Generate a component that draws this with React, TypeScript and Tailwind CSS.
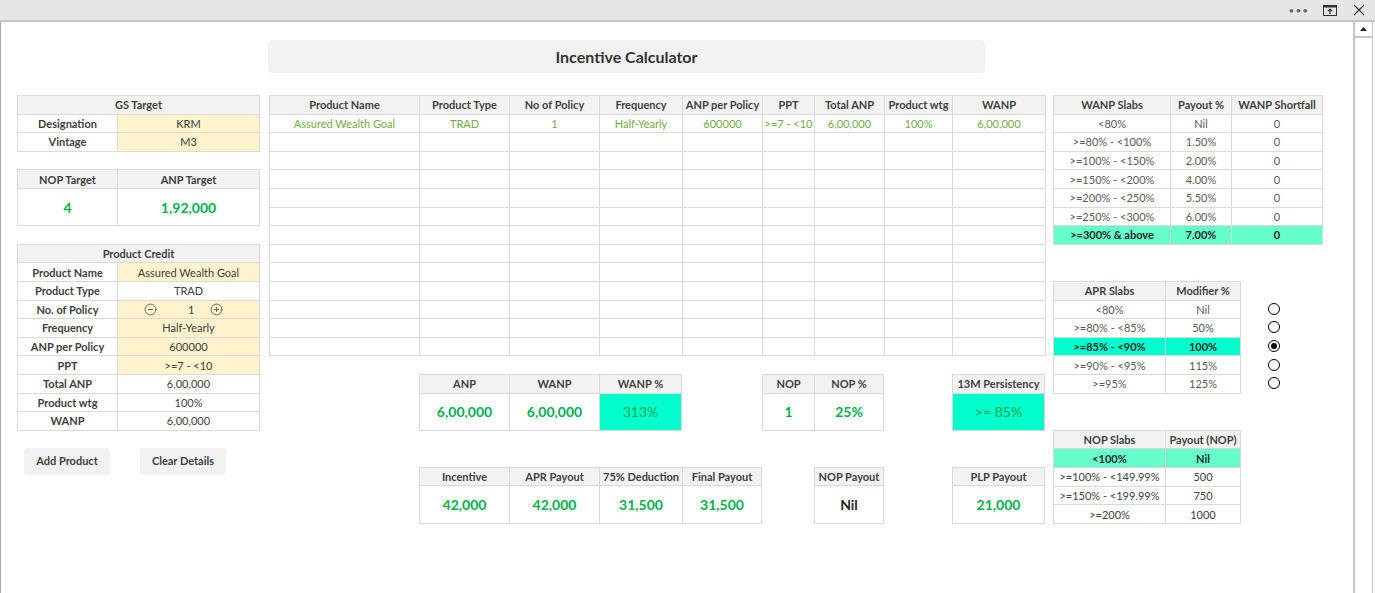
import type { ReactNode } from 'react';
import { CircleMinus, CirclePlus } from 'lucide-react';

type CellProps = { children?: ReactNode; className?: string };

function Cell({ children, className = '' }: CellProps) {
  return (
    <div
      className={`flex h-[18.6px] items-center justify-center whitespace-nowrap border-r border-b border-[#d9d9d9] text-[11px] leading-none ${className}`}
    >
      {children}
    </div>
  );
}

function Head({ children, className = '' }: CellProps) {
  return <Cell className={`bg-[#f2f2f2] font-bold text-[#404040] ${className}`}>{children}</Cell>;
}

function Value({ children, className = '' }: CellProps) {
  return (
    <div
      className={`flex h-[37.2px] items-center justify-center border-r border-b border-[#d9d9d9] text-[14px] ${className}`}
    >
      {children}
    </div>
  );
}

const productCredit: { label: string; value: ReactNode; yellow?: boolean }[] = [
  { label: 'Product Name', value: 'Assured Wealth Goal', yellow: true },
  { label: 'Product Type', value: 'TRAD' },
  {
    label: 'No. of Policy',
    yellow: true,
    value: (
      <span className="flex w-full items-center pl-[26px]">
        <CircleMinus size={13} strokeWidth={1.4} className="text-[#404040]" />
        <span className="ml-[31px]">1</span>
        <CirclePlus size={13} strokeWidth={1.4} className="ml-[16px] text-[#404040]" />
      </span>
    ),
  },
  { label: 'Frequency', value: 'Half-Yearly', yellow: true },
  { label: 'ANP per Policy', value: '600000', yellow: true },
  { label: 'PPT', value: '>=7 - <10', yellow: true },
  { label: 'Total ANP', value: '6,00,000' },
  { label: 'Product wtg', value: '100%' },
  { label: 'WANP', value: '6,00,000' },
];

const mainHeaders = [
  'Product Name',
  'Product Type',
  'No of Policy',
  'Frequency',
  'ANP per Policy',
  'PPT',
  'Total ANP',
  'Product wtg',
  'WANP',
];

const firstRow = ['Assured Wealth Goal', 'TRAD', '1', 'Half-Yearly', '600000', '>=7 - <10', '6,00,000', '100%', '6,00,000'];

const wanpSlabs = [
  ['<80%', 'Nil', '0'],
  ['>=80% - <100%', '1.50%', '0'],
  ['>=100% - <150%', '2.00%', '0'],
  ['>=150% - <200%', '4.00%', '0'],
  ['>=200% - <250%', '5.50%', '0'],
  ['>=250% - <300%', '6.00%', '0'],
];

const aprSlabs = [
  ['<80%', 'Nil'],
  ['>=80% - <85%', '50%'],
  ['>=85% - <90%', '100%'],
  ['>=90% - <95%', '115%'],
  ['>=95%', '125%'],
];

const nopSlabs = [
  ['>=100% - <149.99%', '500'],
  ['>=150% - <199.99%', '750'],
  ['>=200%', '1000'],
];

function TopBar() {
  return (
    <div className="flex h-[22px] shrink-0 items-center justify-end border-b-2 border-[#c4c4c4] bg-[#e6e6e6] pr-[10px]">
      <span className="mr-[14px] text-[10px] leading-none tracking-[1px] text-[#666]">•••</span>
      <svg width="14" height="11" viewBox="0 0 14 11" className="mr-[16px]">
        <rect x="0.5" y="0.5" width="13" height="10" fill="none" stroke="#333" />
        <rect x="0.5" y="0.5" width="13" height="2" fill="#333" />
        <path d="M7 9V4M4.8 6.2L7 4l2.2 2.2" fill="none" stroke="#333" strokeWidth="1.2" />
      </svg>
      <svg width="12" height="12" viewBox="0 0 12 12">
        <path d="M1 1l10 10M11 1L1 11" stroke="#333" strokeWidth="1.1" />
      </svg>
    </div>
  );
}

function Scrollbar() {
  return (
    <div className="flex w-[22px] shrink-0">
      <div className="flex w-[20px] flex-col border-l-2 border-r border-[#c6c6c6] bg-white">
        <div className="flex h-[16px] items-center justify-center border-b-2 border-[#c6c6c6]">
          <svg width="7" height="4" viewBox="0 0 7 4">
            <path d="M0 4L3.5 0L7 4Z" fill="#222" />
          </svg>
        </div>
      </div>
    </div>
  );
}

function LeftColumn() {
  return (
    <div className="flex w-[243px] shrink-0 flex-col">
      <div className="grid grid-cols-[100px_142px] border-t border-l border-[#d9d9d9] text-[#404040]">
        <Head className="col-span-2">GS Target</Head>
        <Cell className="font-bold">Designation</Cell>
        <Cell className="bg-[#fff2cc]">KRM</Cell>
        <Cell className="font-bold">Vintage</Cell>
        <Cell className="bg-[#fff2cc]">M3</Cell>
      </div>

      <div className="mt-[17.6px] grid grid-cols-[100px_142px] border-t border-l border-[#d9d9d9]">
        <Head>NOP Target</Head>
        <Head>ANP Target</Head>
        <Value className="font-bold text-[#00b050]">4</Value>
        <Value className="font-bold text-[#00b050]">1,92,000</Value>
      </div>

      <div className="mt-[17.6px] grid grid-cols-[100px_142px] border-t border-l border-[#d9d9d9] text-[#404040]">
        <Head className="col-span-2">Product Credit</Head>
        {productCredit.map((row) => (
          <div key={row.label} className="contents">
            <Cell className="font-bold">{row.label}</Cell>
            <Cell className={row.yellow ? 'bg-[#fff2cc]' : ''}>{row.value}</Cell>
          </div>
        ))}
      </div>

      <div className="mt-[17px] flex gap-[30px] pl-[7px]">
        <button className="h-[27px] w-[86px] rounded-[3px] bg-[#f2f2f2] text-[11px] font-bold text-[#404040]">
          Add Product
        </button>
        <button className="h-[27px] w-[86px] rounded-[3px] bg-[#f2f2f2] text-[11px] font-bold text-[#404040]">
          Clear Details
        </button>
      </div>
    </div>
  );
}

function CenterColumn() {
  return (
    <div className="ml-[9px] flex w-[777px] shrink-0 flex-col">
      <div className="grid grid-cols-[150px_90px_90px_83px_80px_52px_70px_68px_93px] border-t border-l border-[#d9d9d9]">
        {mainHeaders.map((h) => (
          <Head key={h}>{h}</Head>
        ))}
        {firstRow.map((v, i) => (
          <Cell key={i} className="text-[11.5px] text-[#70ad47]">
            {v}
          </Cell>
        ))}
        {Array.from({ length: 12 * 9 }).map((_, i) => (
          <Cell key={`e${i}`} />
        ))}
      </div>

      <div className="mt-[17.6px] grid grid-cols-[150px_90px_90px_83px_80px_52px_70px_68px_93px]">
        <div className="col-span-3 col-start-2 grid grid-cols-[90px_90px_82px] border-t border-l border-[#d9d9d9]">
          <Head>ANP</Head>
          <Head>WANP</Head>
          <Head>WANP %</Head>
          <Value className="font-bold text-[#00b050]">6,00,000</Value>
          <Value className="font-bold text-[#00b050]">6,00,000</Value>
          <Value className="bg-[#00ffcc] text-[#00a651]">313%</Value>
        </div>
        <div className="col-span-2 col-start-6 grid grid-cols-[52px_69px] border-t border-l border-[#d9d9d9]">
          <Head>NOP</Head>
          <Head>NOP %</Head>
          <Value className="font-bold text-[#00b050]">1</Value>
          <Value className="font-bold text-[#00b050]">25%</Value>
        </div>
        <div className="col-start-9 grid grid-cols-[92px] border-t border-l border-[#d9d9d9]">
          <Head>13M Persistency</Head>
          <Value className="bg-[#00ffcc] text-[#00a651]">&gt;= 85%</Value>
        </div>
      </div>

      <div className="mt-[36.2px] grid grid-cols-[150px_90px_90px_83px_80px_52px_70px_68px_93px]">
        <div className="col-span-4 col-start-2 grid grid-cols-[90px_90px_83px_79px] border-t border-l border-[#d9d9d9]">
          <Head>Incentive</Head>
          <Head>APR Payout</Head>
          <Head>75% Deduction</Head>
          <Head>Final Payout</Head>
          <Value className="font-bold text-[#00b050]">42,000</Value>
          <Value className="font-bold text-[#00b050]">42,000</Value>
          <Value className="font-bold text-[#00b050]">31,500</Value>
          <Value className="font-bold text-[#00b050]">31,500</Value>
        </div>
        <div className="col-start-7 grid grid-cols-[69px] border-t border-l border-[#d9d9d9]">
          <Head>NOP Payout</Head>
          <Value className="font-bold text-[#262626]">Nil</Value>
        </div>
        <div className="col-start-9 grid grid-cols-[92px] border-t border-l border-[#d9d9d9]">
          <Head>PLP Payout</Head>
          <Value className="font-bold text-[#00b050]">21,000</Value>
        </div>
      </div>
    </div>
  );
}

function Radio({ on }: { on?: boolean }) {
  return (
    <div className="flex h-[18.6px] items-center">
      <div className="flex h-[12px] w-[12px] items-center justify-center rounded-full border border-black bg-white">
        {on && <div className="h-[6px] w-[6px] rounded-full bg-black" />}
      </div>
    </div>
  );
}

function RightColumn() {
  return (
    <div className="ml-[7px] flex flex-col">
      <div className="grid w-[270px] grid-cols-[117px_61px_91px] border-t border-l border-[#d9d9d9] text-[#595959]">
        <Head>WANP Slabs</Head>
        <Head>Payout %</Head>
        <Head>WANP Shortfall</Head>
        {wanpSlabs.map((r) => (
          <div key={r[0]} className="contents">
            <Cell>{r[0]}</Cell>
            <Cell>{r[1]}</Cell>
            <Cell>{r[2]}</Cell>
          </div>
        ))}
        <Cell className="bg-[#66ffcc] font-bold text-[#262626]">&gt;=300% &amp; above</Cell>
        <Cell className="bg-[#66ffcc] font-bold text-[#262626]">7.00%</Cell>
        <Cell className="bg-[#66ffcc] font-bold text-[#262626]">0</Cell>
      </div>

      <div className="mt-[36.2px] flex">
        <div className="grid w-[188px] grid-cols-[112px_75px] border-t border-l border-[#d9d9d9] text-[#595959]">
          <Head>APR Slabs</Head>
          <Head>Modifier %</Head>
          {aprSlabs.map((r) => {
            const hl = r[1] === '100%';
            const cls = hl ? 'bg-[#00ffcc] font-bold text-[#262626]' : '';
            return (
              <div key={r[0]} className="contents">
                <Cell className={cls}>{r[0]}</Cell>
                <Cell className={cls}>{r[1]}</Cell>
              </div>
            );
          })}
        </div>
        <div className="ml-[27px] flex flex-col pt-[18.6px]">
          <Radio />
          <Radio />
          <Radio on />
          <Radio />
          <Radio />
        </div>
      </div>

      <div className="mt-[36.4px] grid w-[188px] grid-cols-[112px_75px] border-t border-l border-[#d9d9d9] text-[#404040]">
        <Head>NOP Slabs</Head>
        <Head>Payout (NOP)</Head>
        <Cell className="bg-[#66ffcc] font-bold text-[#262626]">&lt;100%</Cell>
        <Cell className="bg-[#66ffcc] font-bold text-[#262626]">Nil</Cell>
        {nopSlabs.map((r) => (
          <div key={r[0]} className="contents">
            <Cell>{r[0]}</Cell>
            <Cell>{r[1]}</Cell>
          </div>
        ))}
      </div>
    </div>
  );
}

export default function App() {
  return (
    <div className="flex h-[593px] w-[1375px] flex-col overflow-hidden bg-white font-['Lato',sans-serif] text-[#404040]">
      <TopBar />
      <div className="flex min-h-0 flex-1">
        <div className="flex-1 border-l border-[#a6a6a6] pt-[18px]">
          <div className="ml-[267px] flex h-[33px] w-[717px] items-center justify-center rounded-[4px] bg-[#f2f2f2]">
            <h1 className="text-[16px] font-bold text-[#333]">Incentive Calculator</h1>
          </div>
          <div className="mt-[22px] flex pl-[16px]">
            <LeftColumn />
            <CenterColumn />
            <RightColumn />
          </div>
        </div>
        <Scrollbar />
      </div>
    </div>
  );
}
